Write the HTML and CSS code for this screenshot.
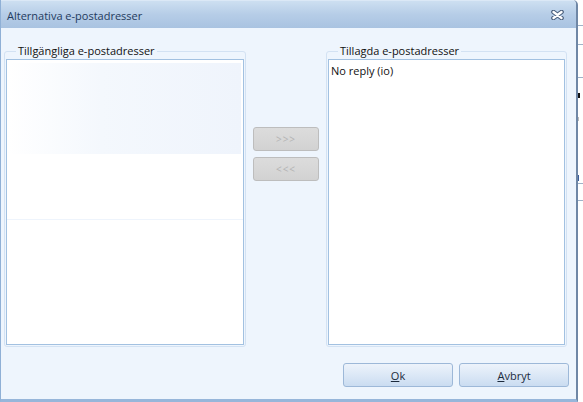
FILE: index.html
```html
<!DOCTYPE html>
<html lang="sv">
<head>
<meta charset="utf-8">
<title>Alternativa e-postadresser</title>
<link rel="stylesheet" href="styles.css">
</head>
<body>
<div class="desk">
  <div class="window">
    <div class="titlebar">
      <span class="title">Alternativa e-postadresser</span>
      <svg class="close" width="13" height="10" viewBox="0 0 13 10">
        <path d="M2.5 2 L10.5 8 M10.5 2 L2.5 8" stroke="#4b607d" stroke-width="4.6" stroke-linecap="round" fill="none"/>
        <path d="M2.5 2 L10.5 8 M10.5 2 L2.5 8" stroke="#ffffff" stroke-width="2.4" stroke-linecap="round" fill="none"/>
      </svg>
    </div>
    <div class="content">
      <div class="panes">
        <div class="group group-left">
          <span class="group-label">Tillgängliga e-postadresser</span>
          <div class="list">
            <div class="stale-a"></div>
            <div class="stale-line"></div>
          </div>
        </div>
        <div class="mid">
          <button class="move" disabled>&gt;&gt;&gt;</button>
          <button class="move" disabled>&lt;&lt;&lt;</button>
        </div>
        <div class="group group-right">
          <span class="group-label">Tillagda e-postadresser</span>
          <div class="list">
            <div class="item">No reply (io)</div>
          </div>
        </div>
      </div>
      <div class="actions">
        <button class="btn"><u>O</u>k</button>
        <button class="btn"><u>A</u>vbryt</button>
      </div>
    </div>
  </div>
  <div class="strip"></div>
</div>
</body>
</html>
```
FILE: styles.css
```css
html, body {
  margin: 0;
  padding: 0;
}
body {
  width: 583px;
  height: 402px;
  overflow: hidden;
  background: #ffffff;
  font-family: "Open Sans", "Noto Sans", "DejaVu Sans", sans-serif;
  font-size: 11px;
  color: #111111;
}
.desk {
  display: flex;
  height: 402px;
}
.window {
  width: 575px;
  height: 399px;
  flex: none;
  border-left: 1px solid #8fb0d6;
  border-right: 2px solid #6f87a6;
  border-bottom: 3px solid #97b6da;
  border-top-right-radius: 5px;
  background: #eef5fd;
  display: flex;
  flex-direction: column;
  overflow: hidden;
}
.titlebar {
  height: 28px;
  flex: none;
  display: flex;
  align-items: center;
  justify-content: space-between;
  padding: 0 12px 0 6px;
  background: linear-gradient(#cddff1, #b6cde7 50%, #a9c3e1);
  border-top: 1px solid #dbe8f6;
  box-sizing: border-box;
}
.title {
  color: #1f3b5e;
  font-size: 11px;
  line-height: 14px;
  padding-top: 2px;
}
.close {
  display: block;
  margin-top: 1px;
}
.content {
  flex: 1;
  display: flex;
  flex-direction: column;
  padding: 23px 0 0 3px;
}
.panes {
  display: flex;
  gap: 7px;
  height: 296px;
}
.group {
  position: relative;
  box-sizing: border-box;
  height: 296px;
  border: 1px solid #d3e2f3;
  border-radius: 3px;
  padding: 7px 1px 1px 1px;
  display: flex;
}
.group-left { width: 242px; }
.group-right { width: 241px; }
.group-label {
  position: absolute;
  top: -9px;
  left: 11px;
  padding: 0 2px;
  background: #eef5fd;
  line-height: 15px;
  font-size: 11px;
  color: #111111;
}
.list {
  flex: 1;
  background: #ffffff;
  border: 1px solid #a2c1e1;
}
.stale-a {
  height: 91px;
  margin: 3px 2px 0 1px;
  background: linear-gradient(90deg, #ffffff, #f4f8fd 40%, #eff4fc);
}
.stale-line {
  height: 1px;
  margin-top: 65px;
  background: #eef4fc;
}
.item {
  padding: 3px 0 0 2px;
  line-height: 15px;
  font-size: 11px;
  color: #111111;
}
.mid {
  width: 66px;
  display: flex;
  flex-direction: column;
  gap: 6px;
  padding-top: 76px;
}
.move {
  width: 66px;
  height: 24px;
  margin: 0;
  padding: 0;
  border: 1px solid #bdbdbd;
  border-radius: 3px;
  background: linear-gradient(#dcdcdc, #d2d2d2);
  color: #b3b3b3;
  font-family: "Open Sans", "Noto Sans", sans-serif;
  font-size: 10px;
  letter-spacing: 1px;
}
.actions {
  display: flex;
  justify-content: flex-end;
  gap: 6px;
  padding: 16px 7px 0 0;
}
.btn {
  width: 110px;
  height: 24px;
  margin: 0;
  padding: 0;
  border: 1px solid #9db8d8;
  border-radius: 3px;
  background: linear-gradient(#edf3fb, #dce8f6 50%, #cadcf1);
  color: #1b2a3d;
  font-family: "Open Sans", "Noto Sans", sans-serif;
  font-size: 11px;
}
.btn u {
  text-decoration-color: #1b2a3d;
}
.strip {
  flex: 1;
  background:
    linear-gradient(#9fb2c8, #9fb2c8) 0 25px / 100% 1px no-repeat,
    linear-gradient(#9fb2c8, #9fb2c8) 0 44px / 100% 1px no-repeat,
    linear-gradient(#9fb2c8, #9fb2c8) 0 77px / 100% 1px no-repeat,
    linear-gradient(#111, #111) 0 93px / 2px 5px no-repeat,
    linear-gradient(#bbb, #bbb) 0 117px / 1px 4px no-repeat,
    linear-gradient(#3c5e9a, #3c5e9a) 0 175px / 1px 6px no-repeat,
    linear-gradient(#9fb2c8, #9fb2c8) 0 183px / 100% 1px no-repeat,
    linear-gradient(#9fb2c8, #9fb2c8) 0 200px / 100% 1px no-repeat,
    #ffffff;
}
```
